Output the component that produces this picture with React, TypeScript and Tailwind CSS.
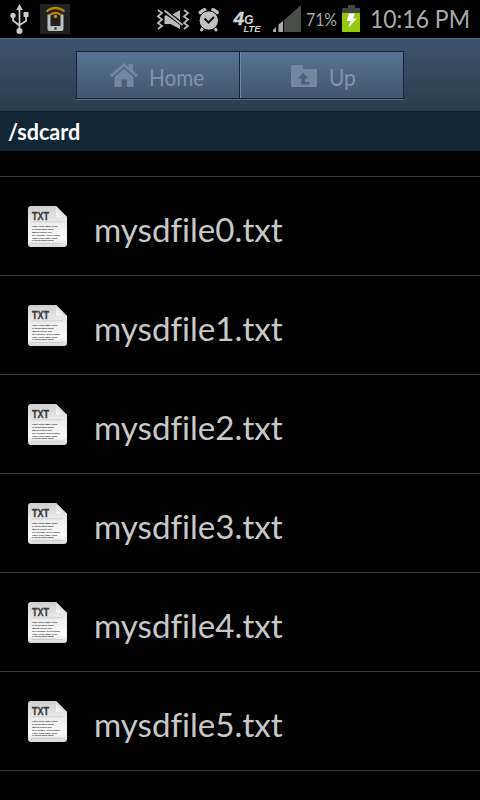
const files = [0, 1, 2, 3, 4, 5].map((n) => `mysdfile${n}.txt`);

const snippet = [
  'Once Told Times Misc',
  'to Brad know man',
  'queen  exacto owe',
  'are ootlines. Deiz Upded',
  'Once Told Times Misc',
  'to Brad know man',
];

function StatusIcons() {
  return (
    <svg className="block h-[38px] w-[304px] shrink-0" viewBox="0 0 304 38" fill="none">
      {/* USB */}
      <g stroke="#c9cbc9" strokeWidth="1.8">
        <path d="M19.500 8v22M13 16v4.500l6.500 5M26 14v7l-6.500 4" />
      </g>
      <g fill="#c9cbc9">
        <path d="M19.500 4l3.300 6h-6.600zM23.500 12h5v5h-5z" />
        <circle cx="13" cy="15.500" r="2.700" />
        <circle cx="19.500" cy="31" r="3" />
      </g>
      {/* Tethering */}
      <path fill="#202120" d="M40 4h30v30H40z" />
      <path fill="#bdbfbd" d="M47.500 14.500h3V26h10V14.500h3V29q0 2-2 2h-12q-2 0-2-2z" />
      <circle cx="55.500" cy="28.500" r="1.200" fill="#333" />
      <g stroke="#b98212" strokeWidth="2.200">
        <path d="M46.500 11.500q9-7 18 0M50 14.800q5.500-4 11 0" />
      </g>
      <circle cx="55.500" cy="16.500" r="1.800" fill="#b98212" />
      {/* Muted vibration */}
      <g stroke="#b9bbb8" strokeWidth="1.800">
        <path d="M158 10l4 3-4 3.500 4 3-4 3.500 4 3-4 3M184 10l4 3-4 3.500 4 3-4 3.500 4 3-4 3" />
      </g>
      <path fill="#b9bbb8" d="M164.500 15.500h2.500l13 9.500v4l-9.500-5h-6zM172.500 14.500L180 10v10z" />
      <path d="M164.500 10.500l18 14.500" stroke="#b9bbb8" strokeWidth="2" />
      {/* Alarm */}
      <g stroke="#c1c3c0" strokeLinecap="round">
        <path strokeWidth="4" d="M200.500 12.500l4-2.500M217 12.500l-4-2.500" />
        <path strokeWidth="3" d="M203.500 27l-2 3M214 27l2 3" />
      </g>
      <circle cx="208.800" cy="20.500" r="9.700" fill="#c1c3c0" stroke="#000" strokeWidth="1" />
      <path d="M204.500 18.500l4 4 5.500-5.500" stroke="#111" strokeWidth="2" />
      {/* Network type */}
      <g fill="#d0d2cf" fontFamily="Liberation Sans, sans-serif" fontWeight="700" fontStyle="italic">
        <text x="233.500" y="25" fontSize="18" stroke="#d0d2cf" strokeWidth=".5" textLength="10.500" lengthAdjust="spacingAndGlyphs">4</text>
        <text x="244" y="23.500" fontSize="12.500" textLength="9.500" lengthAdjust="spacingAndGlyphs">G</text>
        <text x="243.500" y="32" fontSize="9.500" textLength="17" lengthAdjust="spacingAndGlyphs">LTE</text>
      </g>
      {/* Signal */}
      <path fill="#4b4d4b" d="M284 20L301 5v27h-17z" />
      <path fill="#a9aba9" d="M273 32v-2l3-3v5zM278.500 32v-7.500l4.500-3.500v11z" />
    </svg>
  );
}

function Battery() {
  return (
    <svg className="mt-[5px] block h-[28px] w-[18px] shrink-0" viewBox="0 0 18 28">
      <path fill="#454745" d="M6 0h7v3h5v6H0V3h6z" />
      <path fill="#96c90c" d="M0 8h18v19H0z" />
      <path fill="#fff" d="M7 8.500h6l-2 5h4L6.500 22.500 8.500 16H4.500z" />
    </svg>
  );
}

function TxtIcon() {
  return (
    <svg className="mt-px block h-[42px] w-[40px] shrink-0" viewBox="0 0 40 42">
      <defs>
        <linearGradient id="page" x1="0" y1="0" x2="0" y2="1">
          <stop stopColor="#cfcfcf" />
          <stop offset=".4" stopColor="#ececec" />
          <stop offset=".8" stopColor="#fafafa" />
          <stop offset="1" stopColor="#d8d8d8" />
        </linearGradient>
        <linearGradient id="fold" x1="0" y1="1" x2="1" y2="0">
          <stop stopColor="#fff" />
          <stop offset="1" stopColor="#b8b8b8" />
        </linearGradient>
      </defs>
      <path fill="url(#page)" d="M3 0h25l11 11v27q0 3-3 3H3q-3 0-3-3V3q0-3 3-3z" />
      <path fill="url(#fold)" d="M28 0l11 11H30q-2 0-2-2z" />
      <text x="4" y="14" fontSize="10" fontWeight="700" fill="#3c3c3c" stroke="#3c3c3c" strokeWidth=".3" fontFamily="Liberation Sans, sans-serif" textLength="17" lengthAdjust="spacingAndGlyphs">TXT</text>
      <path stroke="#bdbdbd" strokeWidth=".6" d="M3 15.800h32M3 37.500h32" />
      <g fontSize="2.700" fontWeight="700" fill="#111" fontFamily="Liberation Serif, serif">
        {snippet.map((line, i) => (
          <text key={i} x="4" y={21.2 + i * 2.85}>{line}</text>
        ))}
      </g>
    </svg>
  );
}

function HomeIcon() {
  return (
    <svg className="block h-[26px] w-[28px] shrink-0" viewBox="0 0 28 26" fill="#7487a0">
      <path d="M0 13L14 1l4.500 3.800V2h4.500v6.500l5 4.500-2 2.200L14 4.700 2 15.200z" />
      <path d="M4.500 15L14 6.800l9.500 8.200V25H17v-7.500h-5.500V25h-7z" />
    </svg>
  );
}

function UpIcon() {
  return (
    <svg className="mt-px block h-[22px] w-[26px] shrink-0" viewBox="0 0 26 22">
      <path fill="#7487a0" d="M0 1q0-1 1-1h10q1 0 1 1v3h13q1 0 1 1v16q0 1-1 1H1q-1 0-1-1z" />
      <path fill="#4b6079" d="M12 8l5 5.500h-3V17h4.500v2.500h-8v-6H7z" />
    </svg>
  );
}

export default function App() {
  return (
    <div className="flex h-[800px] w-[480px] flex-col overflow-hidden bg-black font-['Lato','Open_Sans',sans-serif]">
      <div className="flex h-[38px] shrink-0 items-start overflow-hidden whitespace-nowrap text-[#a9aaa9]">
        <StatusIcons />
        <span className="ml-0.5 mt-[9px] w-[36px] shrink-0 origin-left scale-x-[.93] text-[17px] leading-[22px]">71%</span>
        <Battery />
        <span className="ml-[10px] mt-[2px] shrink-0 origin-left scale-x-[.9] text-[25.5px] leading-[32px]">10:16 PM</span>
      </div>

      <div className="flex h-[74px] shrink-0 justify-center border-b border-t border-b-[#0d1d29] border-t-[#54687c] bg-linear-to-b from-[#3e536b] to-[#2c3d4c] pt-3">
        <div className="flex h-[49px] w-[328px] border-b border-[#536777]">
          <div className="flex h-12 w-full border border-[#15263a] bg-linear-to-b from-[#587393] to-[#43566c] text-[23px] text-[#8093aa]">
            <div className="flex w-[163px] items-center border-r border-[#15263a] pl-[33px]">
              <HomeIcon />
              <span className="ml-[11px] mt-1 origin-left scale-x-[.9]">Home</span>
            </div>
            <div className="flex flex-1 items-center border-l border-[#7188a1] pl-[50px]">
              <UpIcon />
              <span className="ml-3 mt-1 origin-left scale-x-[.91]">Up</span>
            </div>
          </div>
        </div>
      </div>

      <div className="h-[39px] shrink-0 bg-[#122636] pl-2 text-[22px] font-bold leading-[40px] text-white">
        <span className="inline-block origin-left scale-x-[.98]">/sdcard</span>
      </div>

      <div className="h-[26px] shrink-0 border-b border-[#3c3c3c]" />
      {files.map((name) => (
        <div key={name} className="flex h-[99px] shrink-0 items-center border-b border-[#3c3c3c] pl-7">
          <TxtIcon />
          <span className="ml-[26px] mt-2 origin-left scale-x-[1.035] text-[32px] leading-10 text-[#c8c8c8] [font-variant-ligatures:none]">{name}</span>
        </div>
      ))}
    </div>
  );
}
